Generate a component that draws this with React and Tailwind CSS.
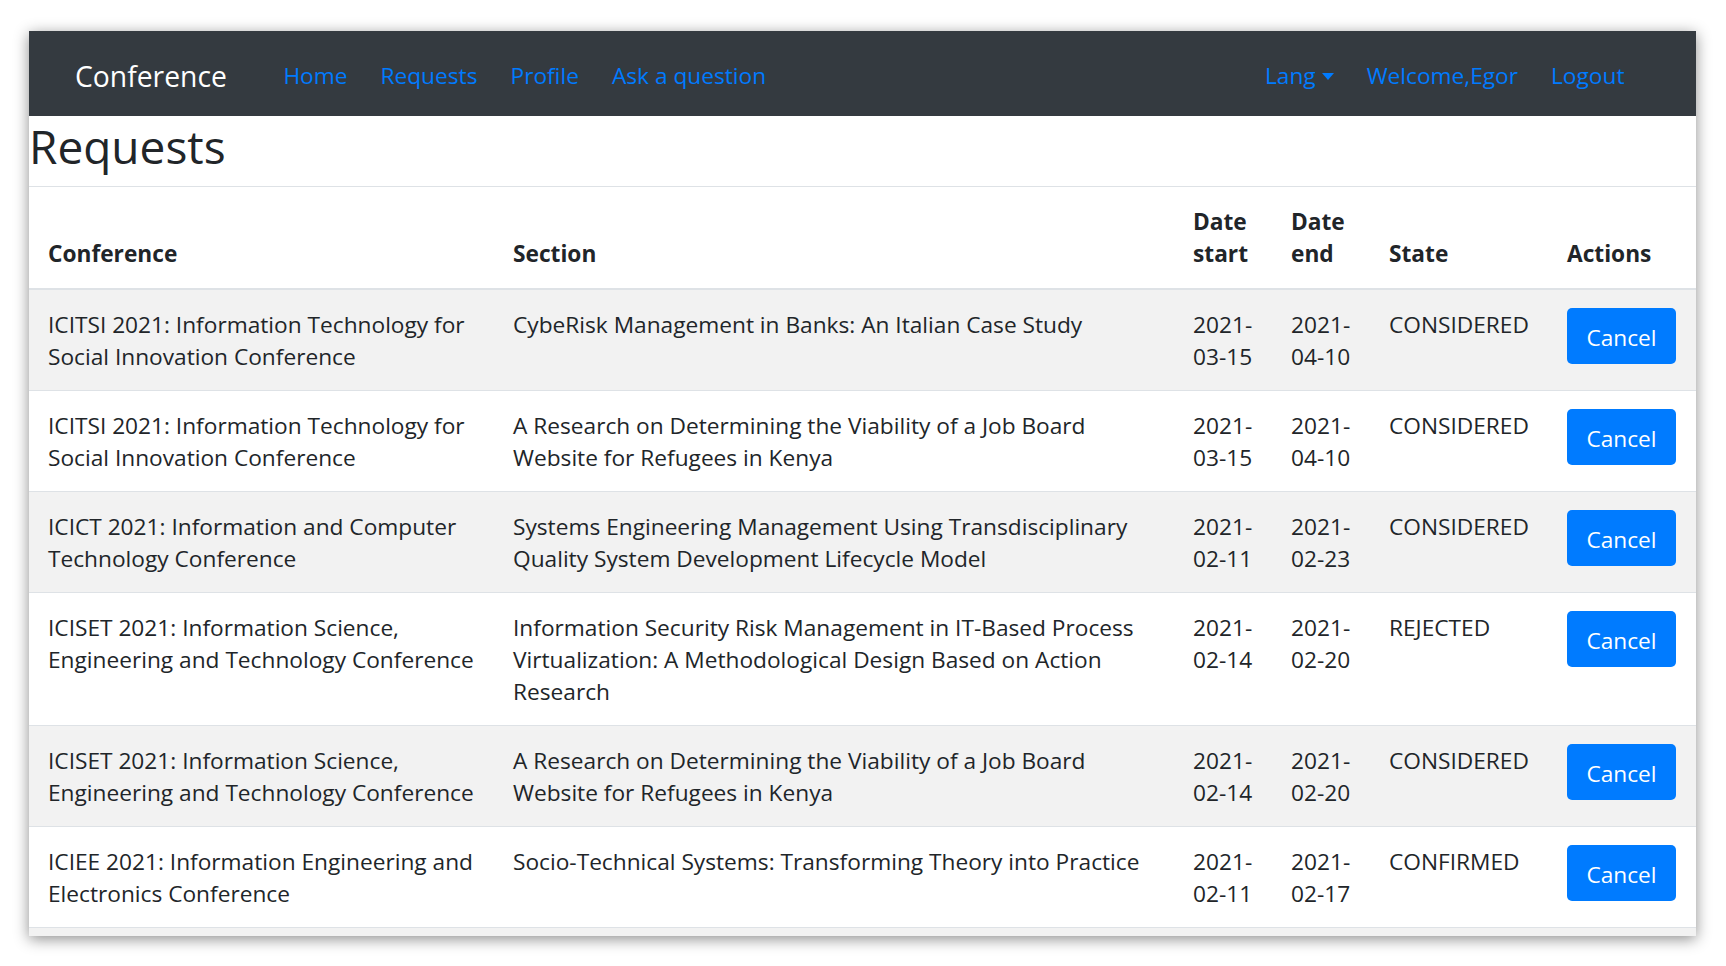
import React from "react";

const rows = [
  {
    conf: "ICITSI 2021: Information Technology for Social Innovation Conference",
    section: "CybeRisk Management in Banks: An Italian Case Study",
    start: "2021-03-15",
    end: "2021-04-10",
    state: "CONSIDERED",
  },
  {
    conf: "ICITSI 2021: Information Technology for Social Innovation Conference",
    section: "A Research on Determining the Viability of a Job Board Website for Refugees in Kenya",
    start: "2021-03-15",
    end: "2021-04-10",
    state: "CONSIDERED",
  },
  {
    conf: "ICICT 2021: Information and Computer Technology Conference",
    section: "Systems Engineering Management Using Transdisciplinary Quality System Development Lifecycle Model",
    start: "2021-02-11",
    end: "2021-02-23",
    state: "CONSIDERED",
  },
  {
    conf: "ICISET 2021: Information Science, Engineering and Technology Conference",
    section: "Information Security Risk Management in IT-Based Process Virtualization: A Methodological Design Based on Action Research",
    start: "2021-02-14",
    end: "2021-02-20",
    state: "REJECTED",
  },
  {
    conf: "ICISET 2021: Information Science, Engineering and Technology Conference",
    section: "A Research on Determining the Viability of a Job Board Website for Refugees in Kenya",
    start: "2021-02-14",
    end: "2021-02-20",
    state: "CONSIDERED",
  },
  {
    conf: "ICIEE 2021: Information Engineering and Electronics Conference",
    section: "Socio-Technical Systems: Transforming Theory into Practice",
    start: "2021-02-11",
    end: "2021-02-17",
    state: "CONFIRMED",
  },
];

function NavBar() {
  return (
    <nav className="flex items-center h-[85px] bg-[#343a40] pl-[46px] pr-[55px] pt-[6px] text-[22.7px]">
      <a className="text-white text-[28.3px] mr-[40px]">Conference</a>
      <ul className="flex items-center">
        {["Home", "Requests", "Profile", "Ask a question"].map((l) => (
          <li key={l}>
            <a className="block px-[16.5px] text-[#007bff]">{l}</a>
          </li>
        ))}
      </ul>
      <ul className="flex items-center ml-auto">
        <li>
          <a className="flex items-center px-[16.5px] text-[#007bff]">
            Lang
            <span className="ml-[6px] w-0 h-0 border-t-[7px] border-t-[#007bff] border-x-[6.5px] border-x-transparent" />
          </a>
        </li>
        <li>
          <a className="block px-[16.5px] text-[#007bff]">Welcome,Egor</a>
        </li>
        <li>
          <a className="block px-[16.5px] text-[#007bff]">Logout</a>
        </li>
      </ul>
    </nav>
  );
}

export default function App() {
  return (
    <div className="w-[1726px] h-[966px] bg-white pt-[31px] pl-[29px] font-['Open_Sans',sans-serif] text-[#212529]">
      <div className="w-[1667px] h-[905px] overflow-hidden bg-white shadow-[0_3px_14px_rgba(0,0,0,0.45)]">
        <NavBar />

        {/* Заголовок */}
        <h1 className="mt-[3px] mb-[13px] text-[46px] leading-[54px] font-medium">Requests</h1>

        <table className="w-full table-fixed border-collapse text-[22.7px] leading-[32px]">
          <colgroup>
            <col className="w-[465px]" />
            <col className="w-[680px]" />
            <col className="w-[98px]" />
            <col className="w-[98px]" />
            <col className="w-[178px]" />
            <col className="w-[148px]" />
          </colgroup>
          <thead>
            <tr className="border-t border-[#dee2e6]">
              {["Conference", "Section", "Date start", "Date end", "State", "Actions"].map((h) => (
                <th
                  key={h}
                  className="px-[19px] pt-[19px] pb-[18px] text-left align-bottom font-bold border-b-2 border-[#dee2e6]"
                >
                  {h}
                </th>
              ))}
            </tr>
          </thead>
          <tbody>
            {rows.map((r, i) => (
              <tr key={i} className={`border-t border-[#dee2e6] ${i % 2 === 0 ? "bg-[#f2f2f2]" : "bg-white"}`}>
                <td className="px-[19px] pt-[19px] pb-[17px] align-top">{r.conf}</td>
                <td className="px-[19px] pt-[19px] pb-[17px] align-top">{r.section}</td>
                <td className="px-[19px] pt-[19px] pb-[17px] align-top">{r.start}</td>
                <td className="px-[19px] pt-[19px] pb-[17px] align-top">{r.end}</td>
                <td className="px-[19px] pt-[19px] pb-[17px] align-top">{r.state}</td>
                <td className="px-[19px] pt-[18px] pb-[17px] align-top">
                  <button className="h-[56px] w-[109px] pt-[4px] rounded-[5px] bg-[#007bff] text-white text-[22.7px]">
                    Cancel
                  </button>
                </td>
              </tr>
            ))}
            <tr className="border-t border-[#dee2e6] bg-[#f2f2f2]">
              <td className="h-[100px]" colSpan={6} />
            </tr>
          </tbody>
        </table>
      </div>
    </div>
  );
}
